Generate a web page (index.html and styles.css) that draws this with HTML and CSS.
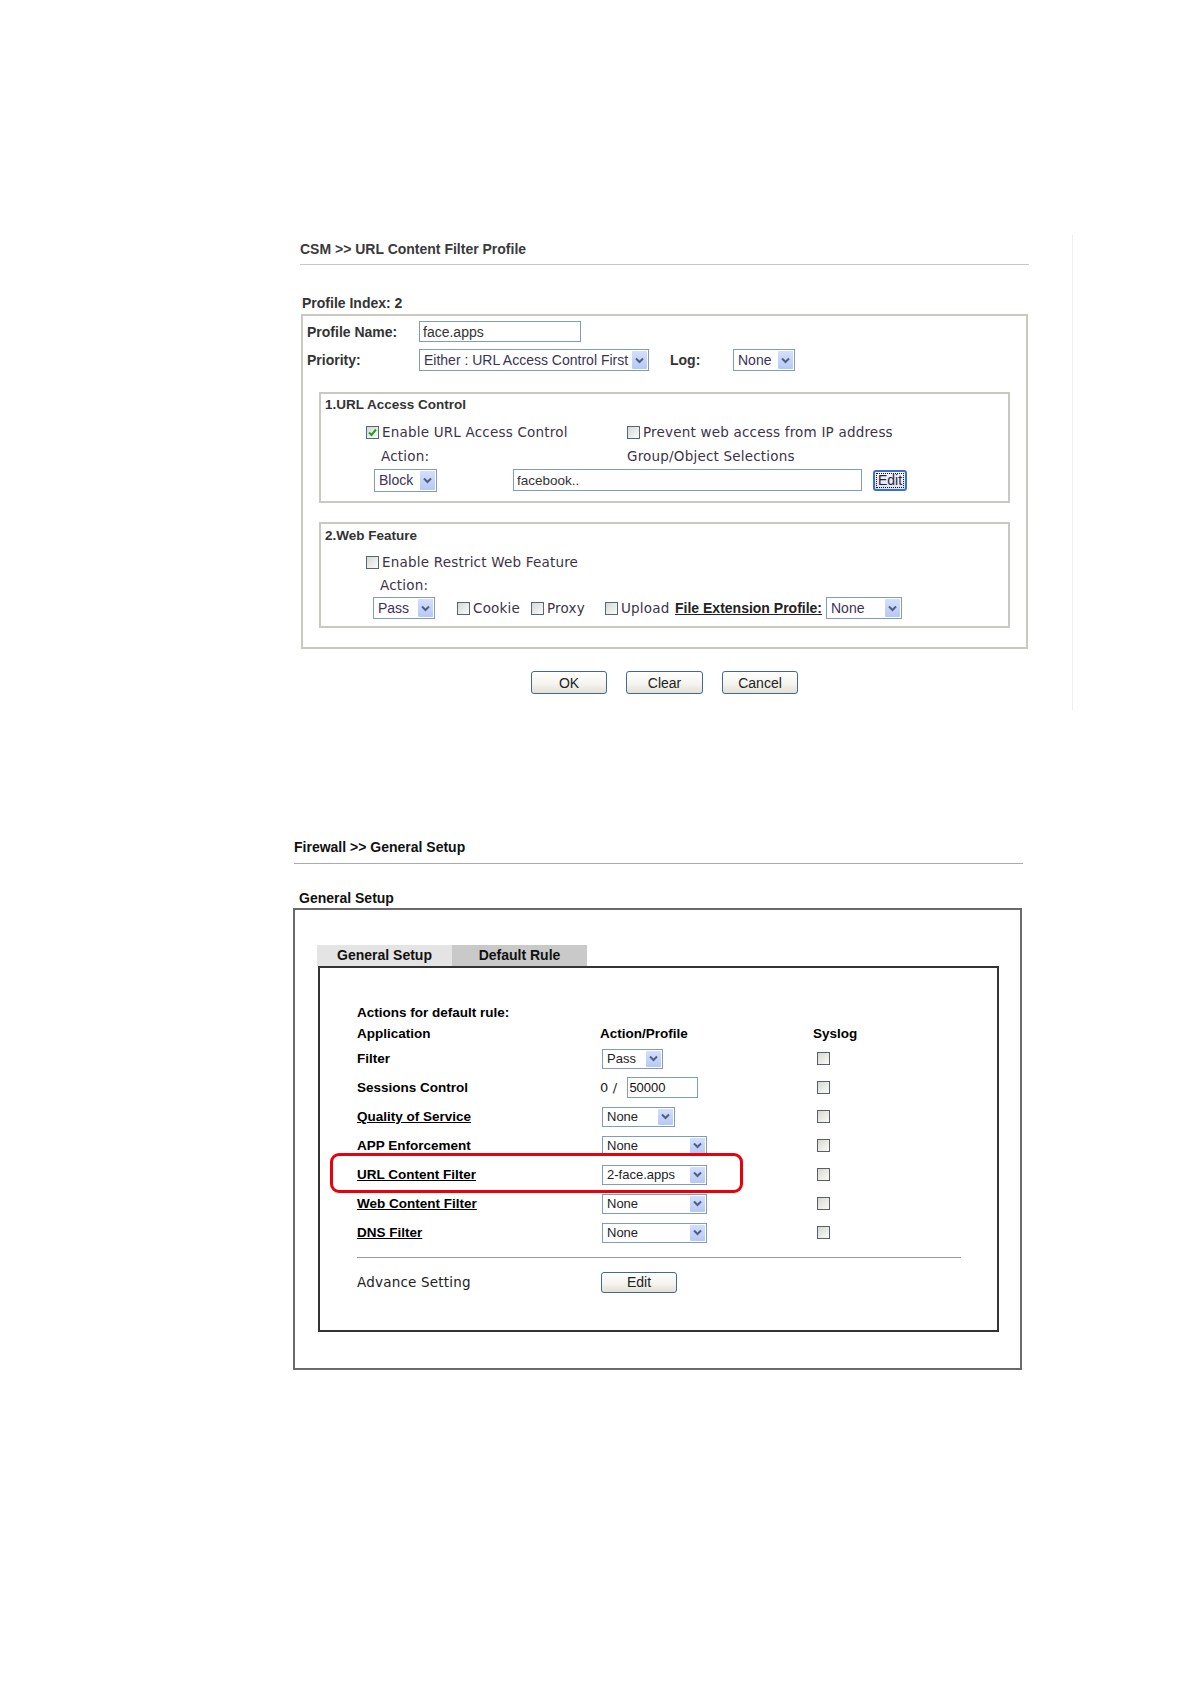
FILE: index.html
```html
<!DOCTYPE html>
<html lang="en">
<head>
<meta charset="UTF-8" />
<title>CSM URL Content Filter Profile / Firewall General Setup</title>
<link rel="stylesheet" href="styles.css">
</head>
<body>

  <!-- CSM >> URL Content Filter Profile -->
  <div class="csm">
    <div class="page-title">CSM &gt;&gt; URL Content Filter Profile</div>
    <div class="profile-index">Profile Index: 2</div>

    <div class="profile-box">
      <div class="prow prow-name">
        <span class="plabel">Profile Name:</span>
        <input class="txt w162" type="text" value="face.apps">
      </div>
      <div class="prow prow-prio">
        <span class="plabel">Priority:</span>
        <span class="sel w230">
          <span class="sel-val">Either : URL Access Control First</span>
          <span class="sel-btn"><svg width="9" height="7" viewBox="0 0 9 7"><path d="M1 1.5 L4.5 5 L8 1.5" /></svg></span>
        </span>
        <span class="plabel log-label">Log:</span>
        <span class="sel w62">
          <span class="sel-val">None</span>
          <span class="sel-btn"><svg width="9" height="7" viewBox="0 0 9 7"><path d="M1 1.5 L4.5 5 L8 1.5" /></svg></span>
        </span>
      </div>

      <div class="fbox fbox-url">
        <div class="fbox-title">1.URL Access Control</div>
        <div class="frow chk-row">
          <span class="fcol-left"><span class="chk on"><svg width="11" height="11" viewBox="0 0 11 11"><path d="M2 5.5 L4.5 8 L9 2.5" /></svg></span>Enable URL Access Control</span>
          <span class="fcol-right"><span class="chk"></span>Prevent web access from IP address</span>
        </div>
        <div class="frow action-row">
          <span class="action-left">Action:</span>
          <span class="vtext">Group/Object Selections</span>
        </div>
        <div class="frow ctrl-row">
          <span class="sel w63 h23">
            <span class="sel-val">Block</span>
            <span class="sel-btn"><svg width="9" height="7" viewBox="0 0 9 7"><path d="M1 1.5 L4.5 5 L8 1.5" /></svg></span>
          </span>
          <input class="txt obj-input" type="text" value="facebook..">
          <button class="btn-focus" type="button"><span>Edit</span></button>
        </div>
      </div>

      <div class="fbox fbox-web">
        <div class="fbox-title">2.Web Feature</div>
        <div class="frow chk-row">
          <span class="fcol-left"><span class="chk"></span>Enable Restrict Web Feature</span>
        </div>
        <div class="frow action-row action-row-web">
          <span class="action-left">Action:</span>
        </div>
        <div class="frow ctrl-row ctrl-row-web">
          <span class="sel w62">
            <span class="sel-val">Pass</span>
            <span class="sel-btn"><svg width="9" height="7" viewBox="0 0 9 7"><path d="M1 1.5 L4.5 5 L8 1.5" /></svg></span>
          </span>
          <span class="opt opt-cookie"><span class="chk"></span>Cookie</span>
          <span class="opt opt-proxy"><span class="chk"></span>Proxy</span>
          <span class="opt opt-upload"><span class="chk"></span>Upload</span>
          <a class="ext-link" href="#">File Extension Profile:</a>
          <span class="sel w76">
            <span class="sel-val">None</span>
            <span class="sel-btn"><svg width="9" height="7" viewBox="0 0 9 7"><path d="M1 1.5 L4.5 5 L8 1.5" /></svg></span>
          </span>
        </div>
      </div>
    </div>

    <div class="btn-row">
      <button class="btn w76" type="button">OK</button>
      <button class="btn w77" type="button">Clear</button>
      <button class="btn w76" type="button">Cancel</button>
    </div>
  </div>

  <!-- Firewall >> General Setup -->
  <div class="fw">
    <div class="fw-title">Firewall &gt;&gt; General Setup</div>
    <div class="fw-heading">General Setup</div>

    <div class="fw-box">
      <div class="tabs">
        <span class="tab tab-general">General Setup</span>
        <span class="tab tab-default">Default Rule</span>
      </div>
      <div class="rule-box">
        <div class="rule-caption">Actions for default rule:</div>
        <div class="rrow rhead">
          <span>Application</span>
          <span>Action/Profile</span>
          <span class="syslog-head">Syslog</span>
        </div>
        <div class="rrow">
          <span>Filter</span>
          <span><span class="sel fsel w61"><span class="sel-val">Pass</span><span class="sel-btn"><svg width="9" height="7" viewBox="0 0 9 7"><path d="M1 1.5 L4.5 5 L8 1.5" /></svg></span></span></span>
          <span><span class="chk"></span></span>
        </div>
        <div class="rrow">
          <span>Sessions Control</span>
          <span class="sess"><span class="vtext">0 /</span><input class="txt sess-input" type="text" value="50000"></span>
          <span><span class="chk"></span></span>
        </div>
        <div class="rrow">
          <span><a href="#">Quality of Service</a></span>
          <span><span class="sel fsel w73"><span class="sel-val">None</span><span class="sel-btn"><svg width="9" height="7" viewBox="0 0 9 7"><path d="M1 1.5 L4.5 5 L8 1.5" /></svg></span></span></span>
          <span><span class="chk"></span></span>
        </div>
        <div class="rrow">
          <span>APP Enforcement</span>
          <span><span class="sel fsel w105"><span class="sel-val">None</span><span class="sel-btn"><svg width="9" height="7" viewBox="0 0 9 7"><path d="M1 1.5 L4.5 5 L8 1.5" /></svg></span></span></span>
          <span><span class="chk"></span></span>
        </div>
        <div class="rrow rrow-marked">
          <span><a href="#">URL Content Filter</a></span>
          <span><span class="sel fsel w105"><span class="sel-val">2-face.apps</span><span class="sel-btn"><svg width="9" height="7" viewBox="0 0 9 7"><path d="M1 1.5 L4.5 5 L8 1.5" /></svg></span></span></span>
          <span><span class="chk"></span></span>
          <span class="mark"></span>
        </div>
        <div class="rrow">
          <span><a href="#">Web Content Filter</a></span>
          <span><span class="sel fsel w105"><span class="sel-val">None</span><span class="sel-btn"><svg width="9" height="7" viewBox="0 0 9 7"><path d="M1 1.5 L4.5 5 L8 1.5" /></svg></span></span></span>
          <span><span class="chk"></span></span>
        </div>
        <div class="rrow">
          <span><a href="#">DNS Filter</a></span>
          <span><span class="sel fsel w105"><span class="sel-val">None</span><span class="sel-btn"><svg width="9" height="7" viewBox="0 0 9 7"><path d="M1 1.5 L4.5 5 L8 1.5" /></svg></span></span></span>
          <span><span class="chk"></span></span>
        </div>
        <div class="rule-sep"></div>
        <div class="rrow radv">
          <span class="vtext">Advance Setting</span>
          <span><button class="btn fw-edit" type="button">Edit</button></span>
          <span></span>
        </div>
      </div>
    </div>
  </div>

</body>
</html>
```

FILE: styles.css
```css
* {
  box-sizing: border-box;
}

body {
  margin: 0;
  background: #fff;
  font-family: "Liberation Sans", Arial, sans-serif;
  color: #333;
}

/* ---------- shared controls ---------- */

.vtext {
  font-family: "DejaVu Sans", Verdana, sans-serif;
  font-size: 13.5px;
  letter-spacing: 0.2px;
  color: #3c3346;
}

.txt {
  height: 21px;
  margin: 0;
  padding: 0 3px;
  border: 1px solid #7f9db9;
  background: #fff;
  font-family: "Liberation Sans", Arial, sans-serif;
  font-size: 14px;
  color: #333;
  outline: none;
}

.sel {
  display: inline-flex;
  align-items: stretch;
  height: 22px;
  padding: 1px;
  border: 1px solid #7f9db9;
  background: #fff;
}

.sel-val {
  flex: 1;
  padding-left: 3px;
  font-size: 14px;
  line-height: 18px;
  color: #3a3356;
  white-space: nowrap;
  overflow: hidden;
}

.sel-btn {
  width: 15px;
  display: flex;
  align-items: center;
  justify-content: center;
  border-radius: 1px;
  background: linear-gradient(#d3dffc, #b7c8f4);
}

.sel-btn path {
  fill: none;
  stroke: #4d6185;
  stroke-width: 2;
}

.h23 { height: 23px; }
.w61 { width: 61px; }
.w62 { width: 62px; }
.w63 { width: 63px; }
.w73 { width: 73px; }
.w76 { width: 76px; }
.w77 { width: 77px; }
.w105 { width: 105px; }
.w162 { width: 162px; }
.w230 { width: 230px; }

.chk {
  display: inline-flex;
  align-items: center;
  justify-content: center;
  width: 13px;
  height: 13px;
  border: 1px solid #56657a;
  background: linear-gradient(135deg, #d8d8d2, #fafaf8);
  flex: none;
}

.chk path {
  fill: none;
  stroke: #21a121;
  stroke-width: 2;
}

.btn {
  height: 23px;
  margin: 0;
  padding: 0;
  border: 1px solid #45698c;
  border-radius: 3px;
  background: linear-gradient(#ffffff 0%, #f5f4ef 55%, #e2e0d6 100%);
  font-family: "Liberation Sans", Arial, sans-serif;
  font-size: 14px;
  color: #222;
}

/* ---------- CSM profile ---------- */

.csm {
  margin: 235px 0 0 300px;
  width: 773px;
  height: 475px;
  border-right: 1px solid #eeeeea;
}

.page-title {
  width: 729px;
  padding: 5px 0 6px;
  line-height: 18px;
  font-size: 14px;
  font-weight: bold;
  color: #3a3a3a;
  border-bottom: 1px solid #c8c8c8;
}

.profile-index {
  margin-top: 29px;
  padding-left: 2px;
  line-height: 18px;
  font-size: 14px;
  font-weight: bold;
}

.profile-box {
  margin: 2px 0 0 1px;
  width: 727px;
  padding: 4px 0 19px;
  border: 2px solid #c9c9c1;
}

.prow {
  display: flex;
  align-items: center;
  padding-left: 4px;
}

.prow-name { height: 23px; }

.prow-prio {
  height: 24px;
  margin-top: 5px;
}

.prow-prio .log-label { margin-left: 21px; }

.plabel {
  width: 112px;
  font-size: 14px;
  font-weight: bold;
  color: #333;
}

.log-label { width: 63px; }

.fbox {
  margin: 0 16px;
  border: 2px solid #c9c9c1;
}

.fbox-url {
  margin-top: 20px;
  padding-bottom: 9px;
}

.fbox-web {
  margin-top: 19px;
  padding: 1px 0 6px;
}

.fbox-title {
  height: 22px;
  padding-left: 4px;
  line-height: 22px;
  font-size: 13.5px;
  font-weight: bold;
  color: #333;
}

.frow {
  display: flex;
  align-items: center;
  height: 24px;
}

.chk-row {
  margin-top: 4px;
  padding-left: 45px;
  font-family: "DejaVu Sans", Verdana, sans-serif;
  font-size: 13.5px;
  letter-spacing: 0.2px;
  color: #3c3346;
}

.fbox-web .chk-row { margin-top: 3px; }

.chk-row .chk { margin-right: 3px; }

.fcol-left {
  width: 261px;
  display: flex;
  align-items: center;
}

.fcol-right {
  display: flex;
  align-items: center;
}

.action-row {
  padding-left: 60px;
  font-family: "DejaVu Sans", Verdana, sans-serif;
  font-size: 13.5px;
  letter-spacing: 0.2px;
  color: #3c3346;
}

.action-row-web {
  height: 22px;
  padding-left: 59px;
}

.action-left { width: 246px; }

.ctrl-row { padding-left: 53px; }

.obj-input {
  width: 349px;
  height: 22px;
  margin-left: 76px;
  font-size: 13.5px;
}

.btn-focus {
  width: 34px;
  height: 21px;
  margin: 0 0 0 11px;
  padding: 1px;
  border: 2px solid #3d6fc9;
  border-radius: 3px;
  background: linear-gradient(#f6f9ff, #d9e3f4);
  font-family: "Liberation Sans", Arial, sans-serif;
  font-size: 14px;
  color: #2b1f3a;
}

.btn-focus span {
  display: block;
  height: 15px;
  line-height: 13px;
  border: 1px dotted #111;
}

.ctrl-row-web { padding-left: 52px; }

.opt {
  display: flex;
  align-items: center;
  font-family: "DejaVu Sans", Verdana, sans-serif;
  font-size: 13.5px;
  letter-spacing: 0.2px;
  color: #3c3346;
}

.opt .chk { margin-right: 3px; }

.opt-cookie {
  width: 74px;
  margin-left: 22px;
}

.opt-proxy { width: 74px; }
.opt-upload { width: 70px; }

.ext-link {
  width: 151px;
  font-size: 14px;
  font-weight: bold;
  color: #222;
  text-decoration: underline;
}

.btn-row {
  width: 729px;
  margin-top: 22px;
  display: flex;
  justify-content: center;
  gap: 19px;
}

/* ---------- Firewall general setup ---------- */

.fw {
  margin: 128px 0 0 293px;
  width: 730px;
  color: #000;
}

.fw-title {
  margin-left: 1px;
  width: 729px;
  padding-bottom: 7px;
  line-height: 18px;
  font-size: 14px;
  font-weight: bold;
  color: #111;
  border-bottom: 1px solid #aaa;
}

.fw-heading {
  margin-top: 25px;
  padding-left: 6px;
  line-height: 18px;
  font-size: 14px;
  font-weight: bold;
  color: #111;
}

.fw-box {
  margin-top: 1px;
  width: 729px;
  padding: 35px 0 36px 22px;
  border: 2px solid #6a6a6a;
}

.tabs {
  display: flex;
}

.tab {
  width: 135px;
  height: 21px;
  line-height: 21px;
  text-align: center;
  font-size: 14px;
  font-weight: bold;
  color: #111;
}

.tab-general { background: #e4e4e4; }
.tab-default { background: #c9c9c9; }

.rule-box {
  margin-left: 1px;
  width: 681px;
  padding: 35px 0 36px 37px;
  border: 2px solid #333;
}

.rule-caption {
  line-height: 20px;
  font-size: 13.5px;
  font-weight: bold;
}

.rrow {
  position: relative;
  display: grid;
  grid-template-columns: 243px 217px 1fr;
  align-items: center;
  height: 29px;
  font-size: 13.5px;
  font-weight: bold;
}

.rrow > span {
  display: flex;
  align-items: center;
}

.rhead {
  height: 21px;
}

.rhead .syslog-head { margin-left: -4px; }

.rrow a {
  color: #000;
  text-decoration: underline;
}

.fsel {
  height: 20px;
  margin-left: 2px;
}

.fsel .sel-val {
  font-size: 13px;
  font-weight: normal;
  line-height: 16px;
  color: #222;
}

.sess .vtext {
  font-size: 13px;
  font-weight: normal;
  color: #222;
}

.sess-input {
  width: 71px;
  margin-left: 10px;
  padding: 0 1px;
  font-size: 13px;
  color: #111;
}

.rrow .chk {
  border-color: #5a5f66;
}

.mark {
  position: absolute;
  top: -7px;
  left: -27px;
  width: 413px;
  height: 40px;
  border: 3px solid #e8000b;
  border-radius: 9px;
}

.rule-sep {
  width: 604px;
  margin-top: 10px;
  border-top: 1px solid #999;
}

.radv {
  height: 24px;
  margin-top: 12px;
}

.radv .vtext {
  font-weight: normal;
  color: #222;
}

.fw-edit {
  width: 76px;
  height: 21px;
  margin-left: 1px;
}
```
